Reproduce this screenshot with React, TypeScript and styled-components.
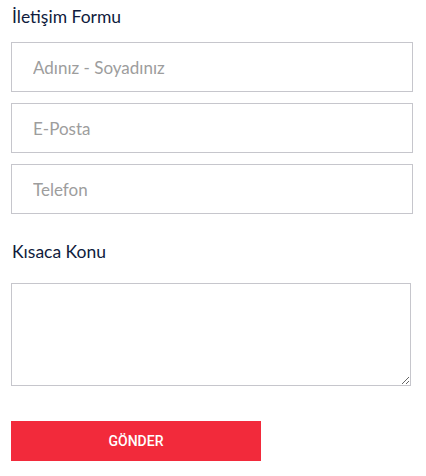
import React from "react";
import styled, { createGlobalStyle } from "styled-components";

const App = () => {
  return (
    <>
      <GlobalStyle />
      <Form onSubmit={(e) => e.preventDefault()}>
        <Heading>İletişim Formu</Heading>
        <Fields>
          <Input type="text" placeholder="Adınız - Soyadınız" />
          <Input type="email" placeholder="E-Posta" />
          <Input type="tel" placeholder="Telefon" />
        </Fields>
        <SubHeading>Kısaca Konu</SubHeading>
        <TextArea />
        <SubmitButton type="submit">GÖNDER</SubmitButton>
      </Form>
    </>
  );
};

export default App;

const GlobalStyle = createGlobalStyle`
  * {
    box-sizing: border-box;
  }
  body {
    margin: 0;
    background: #ffffff;
    font-family: Lato, "Noto Sans", sans-serif;
  }
`;

const Form = styled.form`
  display: flex;
  flex-direction: column;
  align-items: flex-start;
  padding: 5px 13px 0 11px;
`;

const Heading = styled.h2`
  margin: 0 0 13px 1px;
  font-family: Lato, sans-serif;
  font-size: 17.5px;
  font-weight: 400;
  line-height: 24px;
  color: #0f1c3d;
`;

const SubHeading = styled(Heading)`
  margin: 0 0 19px 1px;
`;

const Fields = styled.div`
  display: flex;
  flex-direction: column;
  gap: 11px;
  width: 100%;
  margin-bottom: 26px;
`;

const Input = styled.input`
  width: 100%;
  height: 50px;
  padding: 0 21px;
  border: 1px solid #c6c6cc;
  border-radius: 0;
  font-family: Lato, sans-serif;
  font-size: 17px;
  color: #333;
  outline: none;
  &::placeholder {
    color: #9d9d9d;
  }
`;

const TextArea = styled.textarea`
  width: 400px;
  height: 103px;
  padding: 10px 21px;
  border: 1px solid #c6c6cc;
  border-radius: 0;
  font-family: Lato, sans-serif;
  font-size: 16px;
  outline: none;
  resize: both;
  margin-bottom: 35px;
`;

const SubmitButton = styled.button`
  width: 250px;
  height: 40px;
  border: none;
  border-radius: 0;
  background: #f22a3b;
  color: #ffffff;
  font-family: Roboto, "Liberation Sans", sans-serif;
  font-size: 14px;
  font-weight: 500;
  cursor: pointer;
`;
